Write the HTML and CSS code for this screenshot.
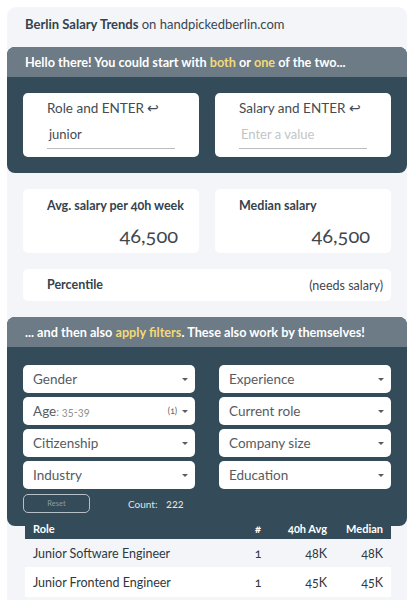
FILE: index.html
```html
<!DOCTYPE html>
<html>
<head>
<meta charset="utf-8">
<link rel="stylesheet" href="styles.css">
</head>
<body>
<div class="page">
  <div class="top"><b>Berlin Salary Trends</b> on handpickedberlin.com</div>

  <section class="panel">
    <div class="panel-head"><p>Hello there! You could start with <span class="hl">both</span> or <span class="hl">one</span> of the two...</p></div>
    <div class="panel-body inputs">
      <div class="in-card">
        <div class="in-label">Role and ENTER ↩</div>
        <div class="in-field">junior</div>
      </div>
      <div class="in-card">
        <div class="in-label">Salary and ENTER ↩</div>
        <div class="in-field placeholder">Enter a value</div>
      </div>
    </div>
  </section>

  <section class="stats">
    <div class="stat">
      <div class="stat-label">Avg. salary per 40h week</div>
      <div class="stat-value">46,500</div>
    </div>
    <div class="stat">
      <div class="stat-label">Median salary</div>
      <div class="stat-value">46,500</div>
    </div>
    <div class="stat wide">
      <div class="stat-label">Percentile</div>
      <div class="stat-note">(needs salary)</div>
    </div>
  </section>

  <section class="panel filters-panel">
    <div class="panel-head"><p>... and then also <span class="hl">apply filters</span>. These also work by themselves!</p></div>
    <div class="panel-body filters">
      <div class="grid">
        <div class="sel"><span class="lbl">Gender</span><i class="caret"></i></div>
        <div class="sel"><span class="lbl">Experience</span><i class="caret"></i></div>
        <div class="sel"><span class="lbl">Age<small>: 35-39</small></span><span class="cnt">(1)</span><i class="caret"></i></div>
        <div class="sel"><span class="lbl">Current role</span><i class="caret"></i></div>
        <div class="sel"><span class="lbl">Citizenship</span><i class="caret"></i></div>
        <div class="sel"><span class="lbl">Company size</span><i class="caret"></i></div>
        <div class="sel"><span class="lbl">Industry</span><i class="caret"></i></div>
        <div class="sel"><span class="lbl">Education</span><i class="caret"></i></div>
      </div>
      <div class="actions">
        <button class="reset">Reset</button>
        <span class="count">Count: <span class="num">222</span></span>
      </div>
    </div>
  </section>

  <div class="table">
    <div class="tr th">
      <div class="c-role">Role</div>
      <div class="c-n">#</div>
      <div class="c-avg">40h Avg</div>
      <div class="c-med">Median</div>
    </div>
    <div class="tr odd">
      <div class="c-role">Junior Software Engineer</div>
      <div class="c-n">1</div>
      <div class="c-avg">48K</div>
      <div class="c-med">48K</div>
    </div>
    <div class="tr even">
      <div class="c-role">Junior Frontend Engineer</div>
      <div class="c-n">1</div>
      <div class="c-avg">45K</div>
      <div class="c-med">45K</div>
    </div>
  </div>
</div>
</body>
</html>
```

FILE: styles.css
```css
* { box-sizing: border-box; }
html, body { margin: 0; padding: 0; background: #ffffff; }
body {
  font-family: "Lato", "Open Sans", sans-serif;
  color: #3a4650;
  font-variant-numeric: oldstyle-nums;
  overflow: hidden;
  height: 600px;
}
p { margin: 0; }
.page {
  margin: 7px 13px 0 7px;
  background: #f3f5f9;
  border-radius: 9px 9px 0 0;
  min-height: 593px;
}
.top {
  height: 40px;
  padding-left: 18px;
  line-height: 34px;
  font-size: 13px;
  color: #3a4650;
  white-space: nowrap;
}
.top b { font-weight: 700; color: #34424d; }

.panel {
  border-radius: 8px;
  overflow: hidden;
  background: #344b59;
}
.panel-head {
  height: 30px;
  background: #6c7b86;
  color: #ffffff;
  font-weight: 700;
  font-size: 12.7px;
  padding-left: 18px;
  display: flex;
  align-items: center;
  white-space: nowrap;
}
.hl { color: #f3d977; }

.inputs {
  padding: 16px;
  display: grid;
  grid-template-columns: repeat(2, minmax(0, 1fr));
  gap: 16px;
}
.in-card {
  background: #ffffff;
  border-radius: 5px;
  height: 64px;
  padding: 6px 24px 0 24px;
}
.in-label {
  font-size: 13.5px;
  color: #444b52;
  height: 18px;
  line-height: 18px;
  white-space: nowrap;
}
.in-field {
  margin-top: 9px;
  width: 128px;
  height: 23px;
  border-bottom: 1px solid #bdbdbd;
  font-size: 13px;
  color: #444b52;
  padding-left: 2px;
  line-height: 16px;
}
.in-field.placeholder { color: #c4c4c4; }

.stats {
  padding: 16px;
  display: grid;
  grid-template-columns: repeat(2, minmax(0, 1fr));
  gap: 16px;
}
.stat {
  background: #ffffff;
  border-radius: 5px;
  height: 64px;
  padding: 9px 21px 0 24px;
  min-width: 0;
}
.stat-label {
  font-size: 12.5px;
  font-weight: 700;
  color: #34424d;
  line-height: 16px;
  white-space: nowrap;
}
.stat-value {
  text-align: right;
  font-size: 20px;
  font-weight: 400;
  color: #3f474e;
  margin-top: 9px;
  line-height: 24px;
}
.stat.wide {
  grid-column: 1 / span 2;
  height: 32px;
  padding: 0 8px 0 24px;
  display: flex;
  align-items: center;
  justify-content: space-between;
}
.stat-note { font-size: 12.5px; color: #3f474e; }

.filters-panel { position: relative; }
.filters { padding: 18px 16px 13px 16px; }
.grid {
  display: grid;
  grid-template-columns: repeat(2, minmax(0, 1fr));
  column-gap: 24px;
  row-gap: 4px;
}
.sel {
  background: #ffffff;
  border-radius: 5px;
  height: 28px;
  padding: 0 7px 0 10px;
  display: flex;
  align-items: center;
  font-size: 13.5px;
  color: #555c62;
}
.sel .lbl { flex: 1; }
.sel small { font-size: 11px; color: #8a8f94; }
.cnt { font-size: 8.5px; color: #555c62; margin-right: 5px; }
.caret {
  width: 0; height: 0;
  border-left: 3px solid transparent;
  border-right: 3px solid transparent;
  border-top: 3px solid #555c62;
}
.actions {
  display: flex;
  align-items: center;
  margin-top: 5px;
  height: 19px;
}
.reset {
  width: 67px;
  height: 19px;
  border: 1px solid #b6c0c7;
  border-radius: 5px;
  background: transparent;
  color: #8d9aa3;
  font-family: inherit;
  font-size: 7.5px;
  padding: 0;
}
.count {
  margin-left: 38px;
  font-size: 10px;
  color: #dfe5e9;
}
.count .num { margin-left: 6px; font-size: 11px; }

.table {
  margin: -9px 16px 0 18px;
  position: relative;
}
.tr {
  display: grid;
  grid-template-columns: 1fr 26px 56px 64px;
  align-items: center;
}
.th {
  height: 22px;
  background: #344b59;
  color: #ffffff;
  font-weight: 700;
  font-size: 11px;
}
.odd, .even { height: 28px; font-size: 12.5px; color: #2f3840; }
.odd { background: #f3f5f9; }
.even { background: #ffffff; height: 30px; }
.c-role { padding-left: 8px; }
.c-n { text-align: center; }
.c-avg { text-align: right; }
.c-med { text-align: right; padding-right: 8px; }
```
